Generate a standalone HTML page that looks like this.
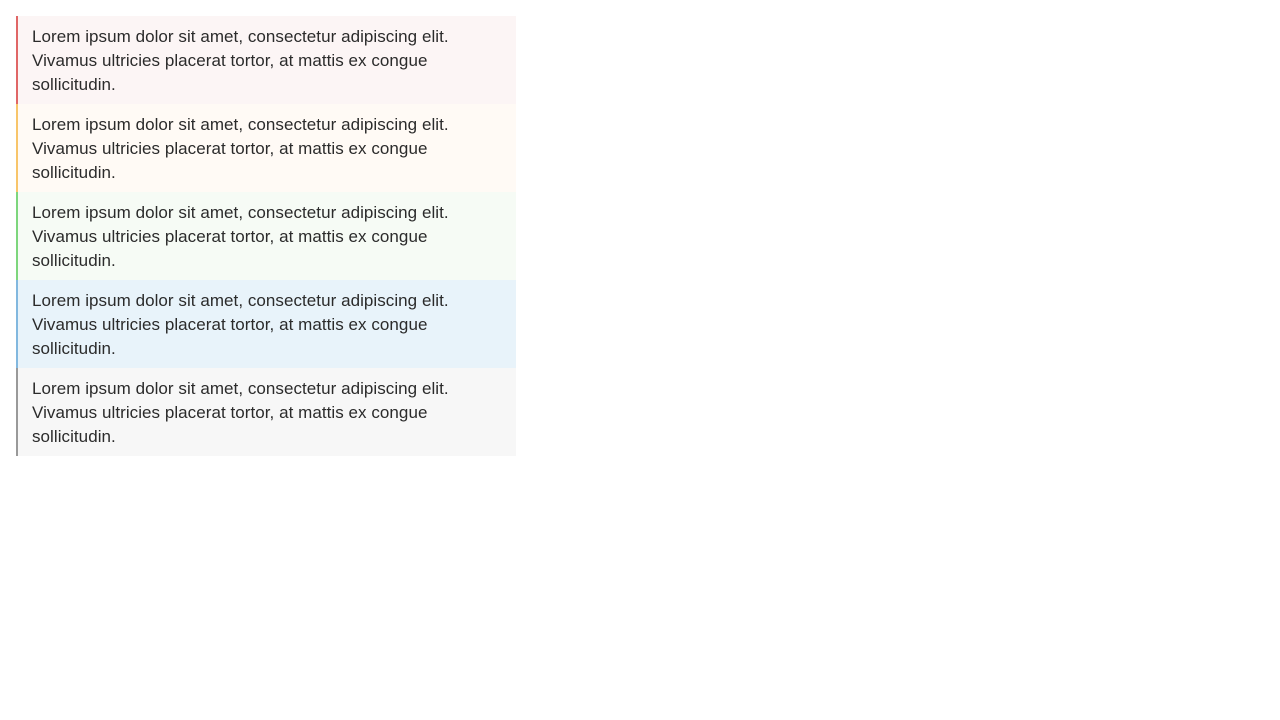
<!DOCTYPE html>
<html><head><style>
body{margin:0;background:#fff;font-family:"Liberation Sans",sans-serif;}
.wrap{position:absolute;left:16px;top:16px;width:500px;}
.b{height:72px;padding:9px 0 7px 14px;border-left:2px solid;font-size:17px;line-height:24px;color:#2b2b2b;white-space:nowrap;letter-spacing:0.05px}
.r{border-color:#e06666;background:#fcf5f5}
.y{border-color:#f8c56a;background:#fffaf5}
.g{border-color:#7dd67d;background:#f6fbf5}
.bl{border-color:#82b8df;background:#e8f3fa}
.gr{border-color:#999;background:#f7f7f7}
</style></head><body><div class="wrap">
<div class="b r">Lorem ipsum dolor sit amet, consectetur adipiscing elit.<br>Vivamus ultricies placerat tortor, at mattis ex congue<br>sollicitudin.</div>
<div class="b y">Lorem ipsum dolor sit amet, consectetur adipiscing elit.<br>Vivamus ultricies placerat tortor, at mattis ex congue<br>sollicitudin.</div>
<div class="b g">Lorem ipsum dolor sit amet, consectetur adipiscing elit.<br>Vivamus ultricies placerat tortor, at mattis ex congue<br>sollicitudin.</div>
<div class="b bl">Lorem ipsum dolor sit amet, consectetur adipiscing elit.<br>Vivamus ultricies placerat tortor, at mattis ex congue<br>sollicitudin.</div>
<div class="b gr">Lorem ipsum dolor sit amet, consectetur adipiscing elit.<br>Vivamus ultricies placerat tortor, at mattis ex congue<br>sollicitudin.</div>
</div></body></html>
